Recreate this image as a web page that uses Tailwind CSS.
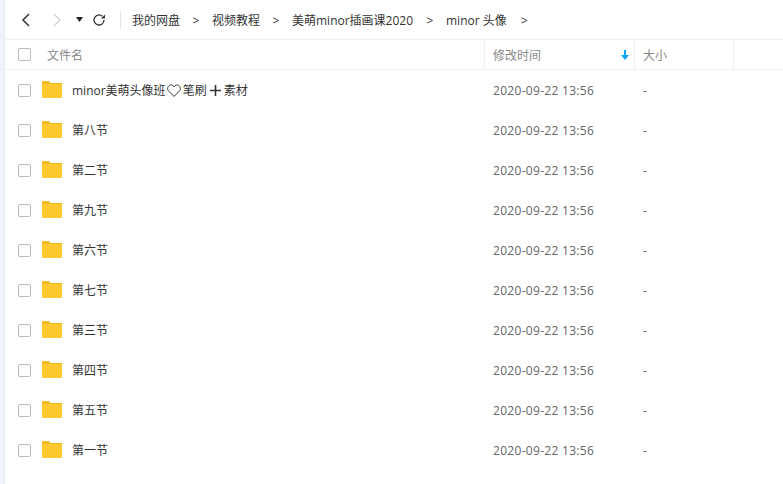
<!DOCTYPE html>
<html><head><meta charset="utf-8">
<script src="https://cdn.jsdelivr.net/npm/@tailwindcss/browser@4"></script>
</head>
<body class="m-0 bg-white overflow-hidden font-['Open_Sans','Noto_Sans_CJK_SC',sans-serif]">
<div class="w-[783px] h-[484px] flex overflow-hidden">
  <div class="w-[5px] bg-[#f0f3f9] border-r border-[#e6e9f0]"></div>
  <div class="flex-1 flex flex-col">
    <div class="h-[40px] flex items-center border-b border-[#f0f0f0] text-[12px] text-[#333]">
      <svg class="ml-[15px]" width="12" height="16" viewBox="0 0 12 16" fill="none" stroke="#333" stroke-width="1.5"><path d="M9 2 3 8l6 6"/></svg>
      <svg class="ml-[19px]" width="12" height="16" viewBox="0 0 12 16" fill="none" stroke="#ccc" stroke-width="1.2"><path d="M3 2l6 6-6 6"/></svg>
      <svg class="ml-[13px]" width="7" height="5" viewBox="0 0 7 5" fill="#222"><path d="M0 0h7L3.500 5z"/></svg>
      <svg class="ml-[9px]" width="14" height="14" viewBox="0 0 14 14" fill="none" stroke="#333" stroke-width="1.300"><path d="M12 7a5 5 0 1 1-1.600-3.700"/><path d="M13 1.500v4h-4z" fill="#333" stroke="none"/></svg>
      <div class="ml-[14px] w-px h-[18px] bg-[#e8e8e8]"></div>
      <span class="ml-[11px] pt-[2px] w-[48px] shrink-0 whitespace-nowrap">我的网盘</span><span class="pt-[2px] w-[32px] shrink-0 text-center">&gt;</span>
      <span class="pt-[2px] w-[48px] shrink-0 whitespace-nowrap">视频教程</span><span class="pt-[2px] w-[32px] shrink-0 text-center">&gt;</span>
      <span class="pt-[2px] w-[122px] shrink-0 whitespace-nowrap">美萌minor插画课2020</span><span class="pt-[2px] w-[32px] shrink-0 text-center">&gt;</span>
      <span class="pt-[2px] w-[62px] shrink-0 whitespace-nowrap">minor 头像</span><span class="pt-[2px] ml-[13px]">&gt;</span>
    </div>
    <div class="h-[30px] flex items-center border-b border-[#f0f0f0] text-[12px] text-[#888]">
      <span class="ml-[13px] w-[13px] h-[13px] border border-[#bbb] rounded-[2px]"></span>
      <span class="ml-[16px] w-[437px] pt-[2px]">文件名</span>
      <div class="w-[150px] h-full flex items-center justify-between border-l border-[#eee] pl-[8px] pr-[5px]"><span class="pt-[2px]">修改时间</span>
        <svg width="8" height="10" viewBox="0 0 8 10" fill="#06a7ff"><path d="M3 0h2v5h3L4 10 0 5h3z"/></svg></div>
      <div class="w-[100px] h-full flex items-center border-l border-r border-[#eee] pl-[8px] pt-[2px]">大小</div>
    </div>
    <div class="flex flex-col text-[12px]">
      <div class="h-[40px] flex items-center"><span class="ml-[13px] w-[13px] h-[13px] border border-[#bbb] rounded-[2px]"></span>
        <svg class="ml-[11px] mb-[1px]" width="20" height="17" viewBox="0 0 20 17"><path d="M1.500 0h5l2 2h10A1.500 1.500 0 0 1 20 3.500v12a1.500 1.500 0 0 1-1.500 1.500h-17A1.500 1.500 0 0 1 0 15.500v-14A1.500 1.500 0 0 1 1.500 0z" fill="#fec92e"/><path d="M0 3h20V2H8L6.500 0h-5A1.500 1.500 0 0 0 0 1.500z" fill="#f5b91a"/></svg>
        <span class="ml-[10px] pt-[2px] w-[421px] text-[#333] flex items-center whitespace-nowrap">minor美萌头像班<svg class="ml-[1px] mb-[2px]" width="14" height="13" viewBox="0 0 14 13" fill="none" stroke="#333"><path d="M7 12.500 1.200 6.500C-.5 3.500 2 .8 4.200 1 5.500 1.100 6.500 2 7 3c.5-1 1.500-1.900 2.800-2C12 .8 14.500 3.500 12.800 6.500z"/></svg><span class="ml-[2px]">笔刷</span><svg class="mx-[2px] mb-[2px]" width="13" height="13" viewBox="0 0 13 13" fill="#333"><path d="M5.700 1h1.600v4.700H12v1.600H7.300V12H5.700V7.300H1V5.700h4.700z"/></svg>素材</span><span class="pt-[2px] w-[150px] text-[#666] tracking-[0.3px]">2020-09-22 13:56</span><span class="pt-[2px] text-[#666]">-</span></div>
      <div class="h-[40px] flex items-center"><span class="ml-[13px] w-[13px] h-[13px] border border-[#bbb] rounded-[2px]"></span>
        <svg class="ml-[11px] mb-[1px]" width="20" height="17" viewBox="0 0 20 17"><path d="M1.500 0h5l2 2h10A1.500 1.500 0 0 1 20 3.500v12a1.500 1.500 0 0 1-1.500 1.500h-17A1.500 1.500 0 0 1 0 15.500v-14A1.500 1.500 0 0 1 1.500 0z" fill="#fec92e"/><path d="M0 3h20V2H8L6.500 0h-5A1.500 1.500 0 0 0 0 1.500z" fill="#f5b91a"/></svg>
        <span class="ml-[10px] pt-[2px] w-[421px] text-[#333]">第八节</span><span class="pt-[2px] w-[150px] text-[#666] tracking-[0.3px]">2020-09-22 13:56</span><span class="pt-[2px] text-[#666]">-</span></div>
      <div class="h-[40px] flex items-center"><span class="ml-[13px] w-[13px] h-[13px] border border-[#bbb] rounded-[2px]"></span>
        <svg class="ml-[11px] mb-[1px]" width="20" height="17" viewBox="0 0 20 17"><path d="M1.500 0h5l2 2h10A1.500 1.500 0 0 1 20 3.500v12a1.500 1.500 0 0 1-1.500 1.500h-17A1.500 1.500 0 0 1 0 15.500v-14A1.500 1.500 0 0 1 1.500 0z" fill="#fec92e"/><path d="M0 3h20V2H8L6.500 0h-5A1.500 1.500 0 0 0 0 1.500z" fill="#f5b91a"/></svg>
        <span class="ml-[10px] pt-[2px] w-[421px] text-[#333]">第二节</span><span class="pt-[2px] w-[150px] text-[#666] tracking-[0.3px]">2020-09-22 13:56</span><span class="pt-[2px] text-[#666]">-</span></div>
      <div class="h-[40px] flex items-center"><span class="ml-[13px] w-[13px] h-[13px] border border-[#bbb] rounded-[2px]"></span>
        <svg class="ml-[11px] mb-[1px]" width="20" height="17" viewBox="0 0 20 17"><path d="M1.500 0h5l2 2h10A1.500 1.500 0 0 1 20 3.500v12a1.500 1.500 0 0 1-1.500 1.500h-17A1.500 1.500 0 0 1 0 15.500v-14A1.500 1.500 0 0 1 1.500 0z" fill="#fec92e"/><path d="M0 3h20V2H8L6.500 0h-5A1.500 1.500 0 0 0 0 1.500z" fill="#f5b91a"/></svg>
        <span class="ml-[10px] pt-[2px] w-[421px] text-[#333]">第九节</span><span class="pt-[2px] w-[150px] text-[#666] tracking-[0.3px]">2020-09-22 13:56</span><span class="pt-[2px] text-[#666]">-</span></div>
      <div class="h-[40px] flex items-center"><span class="ml-[13px] w-[13px] h-[13px] border border-[#bbb] rounded-[2px]"></span>
        <svg class="ml-[11px] mb-[1px]" width="20" height="17" viewBox="0 0 20 17"><path d="M1.500 0h5l2 2h10A1.500 1.500 0 0 1 20 3.500v12a1.500 1.500 0 0 1-1.500 1.500h-17A1.500 1.500 0 0 1 0 15.500v-14A1.500 1.500 0 0 1 1.500 0z" fill="#fec92e"/><path d="M0 3h20V2H8L6.500 0h-5A1.500 1.500 0 0 0 0 1.500z" fill="#f5b91a"/></svg>
        <span class="ml-[10px] pt-[2px] w-[421px] text-[#333]">第六节</span><span class="pt-[2px] w-[150px] text-[#666] tracking-[0.3px]">2020-09-22 13:56</span><span class="pt-[2px] text-[#666]">-</span></div>
      <div class="h-[40px] flex items-center"><span class="ml-[13px] w-[13px] h-[13px] border border-[#bbb] rounded-[2px]"></span>
        <svg class="ml-[11px] mb-[1px]" width="20" height="17" viewBox="0 0 20 17"><path d="M1.500 0h5l2 2h10A1.500 1.500 0 0 1 20 3.500v12a1.500 1.500 0 0 1-1.500 1.500h-17A1.500 1.500 0 0 1 0 15.500v-14A1.500 1.500 0 0 1 1.500 0z" fill="#fec92e"/><path d="M0 3h20V2H8L6.500 0h-5A1.500 1.500 0 0 0 0 1.500z" fill="#f5b91a"/></svg>
        <span class="ml-[10px] pt-[2px] w-[421px] text-[#333]">第七节</span><span class="pt-[2px] w-[150px] text-[#666] tracking-[0.3px]">2020-09-22 13:56</span><span class="pt-[2px] text-[#666]">-</span></div>
      <div class="h-[40px] flex items-center"><span class="ml-[13px] w-[13px] h-[13px] border border-[#bbb] rounded-[2px]"></span>
        <svg class="ml-[11px] mb-[1px]" width="20" height="17" viewBox="0 0 20 17"><path d="M1.500 0h5l2 2h10A1.500 1.500 0 0 1 20 3.500v12a1.500 1.500 0 0 1-1.500 1.500h-17A1.500 1.500 0 0 1 0 15.500v-14A1.500 1.500 0 0 1 1.500 0z" fill="#fec92e"/><path d="M0 3h20V2H8L6.500 0h-5A1.500 1.500 0 0 0 0 1.500z" fill="#f5b91a"/></svg>
        <span class="ml-[10px] pt-[2px] w-[421px] text-[#333]">第三节</span><span class="pt-[2px] w-[150px] text-[#666] tracking-[0.3px]">2020-09-22 13:56</span><span class="pt-[2px] text-[#666]">-</span></div>
      <div class="h-[40px] flex items-center"><span class="ml-[13px] w-[13px] h-[13px] border border-[#bbb] rounded-[2px]"></span>
        <svg class="ml-[11px] mb-[1px]" width="20" height="17" viewBox="0 0 20 17"><path d="M1.500 0h5l2 2h10A1.500 1.500 0 0 1 20 3.500v12a1.500 1.500 0 0 1-1.500 1.500h-17A1.500 1.500 0 0 1 0 15.500v-14A1.500 1.500 0 0 1 1.500 0z" fill="#fec92e"/><path d="M0 3h20V2H8L6.500 0h-5A1.500 1.500 0 0 0 0 1.500z" fill="#f5b91a"/></svg>
        <span class="ml-[10px] pt-[2px] w-[421px] text-[#333]">第四节</span><span class="pt-[2px] w-[150px] text-[#666] tracking-[0.3px]">2020-09-22 13:56</span><span class="pt-[2px] text-[#666]">-</span></div>
      <div class="h-[40px] flex items-center"><span class="ml-[13px] w-[13px] h-[13px] border border-[#bbb] rounded-[2px]"></span>
        <svg class="ml-[11px] mb-[1px]" width="20" height="17" viewBox="0 0 20 17"><path d="M1.500 0h5l2 2h10A1.500 1.500 0 0 1 20 3.500v12a1.500 1.500 0 0 1-1.500 1.500h-17A1.500 1.500 0 0 1 0 15.500v-14A1.500 1.500 0 0 1 1.500 0z" fill="#fec92e"/><path d="M0 3h20V2H8L6.500 0h-5A1.500 1.500 0 0 0 0 1.500z" fill="#f5b91a"/></svg>
        <span class="ml-[10px] pt-[2px] w-[421px] text-[#333]">第五节</span><span class="pt-[2px] w-[150px] text-[#666] tracking-[0.3px]">2020-09-22 13:56</span><span class="pt-[2px] text-[#666]">-</span></div>
      <div class="h-[40px] flex items-center"><span class="ml-[13px] w-[13px] h-[13px] border border-[#bbb] rounded-[2px]"></span>
        <svg class="ml-[11px] mb-[1px]" width="20" height="17" viewBox="0 0 20 17"><path d="M1.500 0h5l2 2h10A1.500 1.500 0 0 1 20 3.500v12a1.500 1.500 0 0 1-1.500 1.500h-17A1.500 1.500 0 0 1 0 15.500v-14A1.500 1.500 0 0 1 1.500 0z" fill="#fec92e"/><path d="M0 3h20V2H8L6.500 0h-5A1.500 1.500 0 0 0 0 1.500z" fill="#f5b91a"/></svg>
        <span class="ml-[10px] pt-[2px] w-[421px] text-[#333]">第一节</span><span class="pt-[2px] w-[150px] text-[#666] tracking-[0.3px]">2020-09-22 13:56</span><span class="pt-[2px] text-[#666]">-</span></div>
    </div>
  </div>
</div>
</body></html>
